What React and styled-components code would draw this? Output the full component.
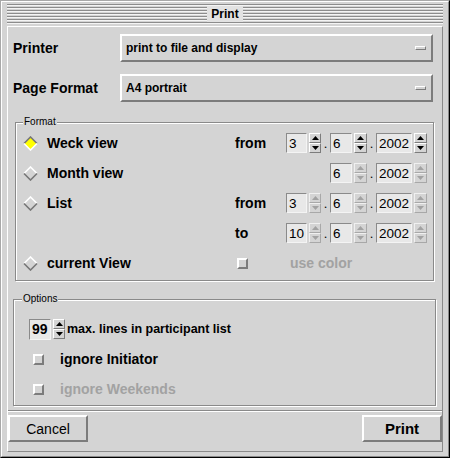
import { Fragment } from 'react';
import styled, { createGlobalStyle } from 'styled-components';

const BG = '#d4d4d4';
const DARK = '#7c7c7c';
const LIGHT = '#ffffff';
const DIM = '#a2a2a2';

const GlobalStyle = createGlobalStyle`
  body {
    margin: 0;
    background: ${BG};
    font-family: "Liberation Sans", Arial, sans-serif;
    color: #000;
  }
`;

const Window = styled.div`
  width: 450px;
  height: 458px;
  box-sizing: border-box;
  border: 1px solid;
  border-color: #a8a8a8 #000 #000 #a8a8a8;
  background: ${BG};
  display: flex;
`;

const Frame = styled.div`
  flex: 1;
  display: flex;
  flex-direction: column;
  border: 1px solid;
  border-color: ${LIGHT} #8a8a8a #8a8a8a ${LIGHT};
  padding: 2px 5px 4px 5px;
`;

const TitleBar = styled.div`
  height: 20px;
  display: flex;
  align-items: center;
  justify-content: center;
  background: repeating-linear-gradient(
    to bottom,
    #8c8c8c 0 1px,
    #f4f4f4 1px 2px,
    ${BG} 2px 3px
  );
`;

const TitleText = styled.div`
  height: 16px;
  padding: 0 4px;
  display: flex;
  align-items: center;
  background: #e2e2e2;
  font-size: 12px;
  font-weight: bold;
`;

const Panel = styled.div`
  flex: 1;
  margin-top: 2px;
  display: flex;
  flex-direction: column;
  border: 1px solid;
  border-color: ${LIGHT} #8a8a8a #8a8a8a ${LIGHT};
`;

const Body = styled.div`
  display: flex;
  flex-direction: column;
  padding: 7px 9px 4px 5px;
  border-bottom: 1px solid #8a8a8a;
  box-shadow: 0 1px 0 ${LIGHT};
`;

const FieldRow = styled.div`
  display: flex;
  align-items: center;
  margin-top: ${(p) => p.$top || 0}px;
`;

const RowLabel = styled.div`
  width: 107px;
  font-size: 14px;
  font-weight: bold;
`;

const ComboBox = styled.div`
  flex: 1;
  height: 28px;
  box-sizing: border-box;
  display: flex;
  align-items: center;
  justify-content: space-between;
  padding: 0 5px 0 4px;
  border: 2px solid;
  border-color: ${LIGHT} ${DARK} ${DARK} ${LIGHT};
  font-size: 12px;
  font-weight: bold;
`;

const ComboMark = styled.span`
  width: 11px;
  height: 4px;
  box-sizing: border-box;
  border: 1px solid;
  border-color: ${LIGHT} ${DARK} ${DARK} ${LIGHT};
`;

const Group = styled.fieldset`
  margin: ${(p) => p.$margin};
  padding: 0;
  border: 1px solid #8a8a8a;
  box-shadow: inset 1px 1px 0 ${LIGHT}, 1px 1px 0 ${LIGHT};
  min-width: 0;
`;

const Legend = styled.legend`
  margin-left: ${(p) => p.$offset}px;
  padding: 0 1px;
  font-size: 10px;
  line-height: 12px;
  background: ${BG};
`;

const FormatGrid = styled.div`
  display: grid;
  grid-template-columns: 212px 51px auto;
  grid-auto-rows: 30px;
  align-items: center;
  padding: 0 0 2px 7px;
`;

const RadioOption = styled.div`
  display: flex;
  align-items: center;
  gap: 9px;
  grid-column: 1;
`;

const Label = styled.span`
  font-size: ${(p) => p.$size || 14}px;
  font-weight: bold;
  color: ${(p) => (p.$disabled ? DIM : '#000')};
  white-space: nowrap;
`;

const Cell = styled.div`
  grid-column: ${(p) => p.$col};
  display: flex;
  align-items: center;
  padding-left: ${(p) => p.$pad || 0}px;
`;

const DateGroup = styled.div`
  display: flex;
  align-items: center;
`;

const Part = styled.div`
  display: flex;
  align-items: center;
  gap: 2px;
  visibility: ${(p) => (p.$hidden ? 'hidden' : 'visible')};
`;

const TextField = styled.div`
  width: ${(p) => p.$w}px;
  height: ${(p) => p.$h || 20}px;
  box-sizing: border-box;
  display: flex;
  align-items: center;
  padding-left: 2px;
  border: 1px solid;
  border-color: #8a8a8a #f4f4f4 #f4f4f4 #8a8a8a;
  background: #e8e8e8;
  font-size: ${(p) => (p.$bold ? 14 : 13.5)}px;
  font-weight: ${(p) => (p.$bold ? 'bold' : 'normal')};
`;

const SpinStack = styled.div`
  display: flex;
  flex-direction: column;
`;

const SpinButton = styled.div`
  width: ${(p) => p.$w}px;
  height: 10px;
  box-sizing: border-box;
  display: flex;
  align-items: center;
  justify-content: center;
  border: 1px solid;
  border-color: ${(p) =>
    p.$disabled
      ? `#f0f0f0 #a8a8a8 #a8a8a8 #f0f0f0`
      : `${LIGHT} ${DARK} ${DARK} ${LIGHT}`};
  svg {
    display: block;
  }
`;

const Dot = styled.span`
  width: 9px;
  text-align: center;
  font-size: 13px;
  align-self: flex-end;
  line-height: 18px;
  visibility: ${(p) => (p.$hidden ? 'hidden' : 'visible')};
`;

const CheckBox = styled.span`
  width: 11px;
  height: 11px;
  box-sizing: border-box;
  border: 2px solid;
  border-color: ${LIGHT} ${DARK} ${DARK} ${LIGHT};
  background: ${BG};
  flex-shrink: 0;
`;

const OptionList = styled.div`
  display: flex;
  flex-direction: column;
  padding: 9px 0 1px 15px;
`;

const OptionRow = styled.div`
  height: 30px;
  display: flex;
  align-items: center;
  gap: ${(p) => p.$gap}px;
  padding-left: ${(p) => p.$pad || 0}px;
`;

const ButtonRow = styled.div`
  flex: 1;
  display: flex;
  justify-content: space-between;
  align-items: flex-start;
  padding-top: 4px;
`;

const PushButton = styled.button`
  width: 80px;
  height: 27px;
  box-sizing: border-box;
  border: 2px solid;
  border-color: ${LIGHT} ${DARK} ${DARK} ${LIGHT};
  background: ${BG};
  font-family: "Liberation Sans", Arial, sans-serif;
  font-size: ${(p) => (p.$primary ? 15 : 14)}px;
  font-weight: ${(p) => (p.$primary ? 'bold' : 'normal')};
  color: #000;
  padding: 0;
`;

const Radio = ({ checked }) => (
  <svg width="15" height="15" viewBox="0 0 15 15">
    <polygon points="7.5,1 14,7.5 7.5,14 1,7.5" fill={checked ? '#ffff00' : BG} />
    <polyline
      points="1,7.5 7.5,1 14,7.5"
      fill="none"
      stroke={checked ? '#777' : LIGHT}
      strokeWidth="1.6"
    />
    <polyline
      points="1,7.5 7.5,14 14,7.5"
      fill="none"
      stroke={checked ? LIGHT : '#777'}
      strokeWidth="1.6"
    />
  </svg>
);

const Spin = ({ w = 13, disabled }) => {
  const c = disabled ? DIM : '#000';
  return (
    <SpinStack>
      <SpinButton $w={w} $disabled={disabled}>
        <svg width="7" height="4" viewBox="0 0 7 4">
          <polygon points="3.5,0 7,4 0,4" fill={c} />
        </svg>
      </SpinButton>
      <SpinButton $w={w} $disabled={disabled}>
        <svg width="7" height="4" viewBox="0 0 7 4">
          <polygon points="0,0 7,0 3.5,4" fill={c} />
        </svg>
      </SpinButton>
    </SpinStack>
  );
};

const DateSpin = ({ day, month, year, disabled, noDay }) => (
  <DateGroup>
    <Part $hidden={noDay}>
      <TextField $w={21}>{day}</TextField>
      <Spin w={12} disabled={disabled} />
    </Part>
    <Dot $hidden={noDay}>.</Dot>
    <Part>
      <TextField $w={22}>{month}</TextField>
      <Spin disabled={disabled} />
    </Part>
    <Dot>.</Dot>
    <Part>
      <TextField $w={36}>{year}</TextField>
      <Spin disabled={disabled} />
    </Part>
  </DateGroup>
);

const formats = [
  { label: 'Weck view', checked: true, from: ['3', '6', '2002'], active: true },
  { label: 'Month view', month: ['6', '2002'] },
  { label: 'List', from: ['3', '6', '2002'] },
];

export default function App() {
  return (
    <>
      <GlobalStyle />
      <Window>
        <Frame>
          <TitleBar>
            <TitleText>Print</TitleText>
          </TitleBar>
          <Panel>
            <Body>
              <FieldRow>
                <RowLabel>Printer</RowLabel>
                <ComboBox>
                  print to file and display
                  <ComboMark />
                </ComboBox>
              </FieldRow>
              <FieldRow $top={12}>
                <RowLabel>Page Format</RowLabel>
                <ComboBox>
                  A4 portrait
                  <ComboMark />
                </ComboBox>
              </FieldRow>

              <Group $margin="14px -1px 0 2px">
                <Legend $offset={7}>Format</Legend>
                <FormatGrid>
                  {formats.map((f) => (
                    <Fragment key={f.label}>
                      <RadioOption>
                        <Radio checked={f.checked} />
                        <Label>{f.label}</Label>
                      </RadioOption>
                      <Cell $col={2}>{f.from && <Label>from</Label>}</Cell>
                      <Cell $col={3}>
                        {f.from ? (
                          <DateSpin
                            day={f.from[0]}
                            month={f.from[1]}
                            year={f.from[2]}
                            disabled={!f.active}
                          />
                        ) : (
                          <DateSpin
                            noDay
                            month={f.month[0]}
                            year={f.month[1]}
                            disabled
                          />
                        )}
                      </Cell>
                    </Fragment>
                  ))}
                  <Cell $col={2}>
                    <Label>to</Label>
                  </Cell>
                  <Cell $col={3}>
                    <DateSpin day="10" month="6" year="2002" disabled />
                  </Cell>
                  <RadioOption>
                    <Radio />
                    <Label>current View</Label>
                  </RadioOption>
                  <Cell $col={2} $pad={2}>
                    <CheckBox />
                  </Cell>
                  <Cell $col={3} $pad={4}>
                    <Label $disabled>use color</Label>
                  </Cell>
                </FormatGrid>
              </Group>

              <Group $margin="12px -3px 0 0">
                <Legend $offset={8}>Options</Legend>
                <OptionList>
                  <OptionRow $gap={2}>
                    <Part>
                      <TextField $w={22} $h={21} $bold>
                        99
                      </TextField>
                      <Spin w={12} />
                    </Part>
                    <Label $size={12.5}>max. lines in participant list</Label>
                  </OptionRow>
                  <OptionRow $gap={16} $pad={4}>
                    <CheckBox />
                    <Label>ignore Initiator</Label>
                  </OptionRow>
                  <OptionRow $gap={16} $pad={4}>
                    <CheckBox />
                    <Label $disabled>ignore Weekends</Label>
                  </OptionRow>
                </OptionList>
              </Group>
            </Body>
            <ButtonRow>
              <PushButton>Cancel</PushButton>
              <PushButton $primary>Print</PushButton>
            </ButtonRow>
          </Panel>
        </Frame>
      </Window>
    </>
  );
}
